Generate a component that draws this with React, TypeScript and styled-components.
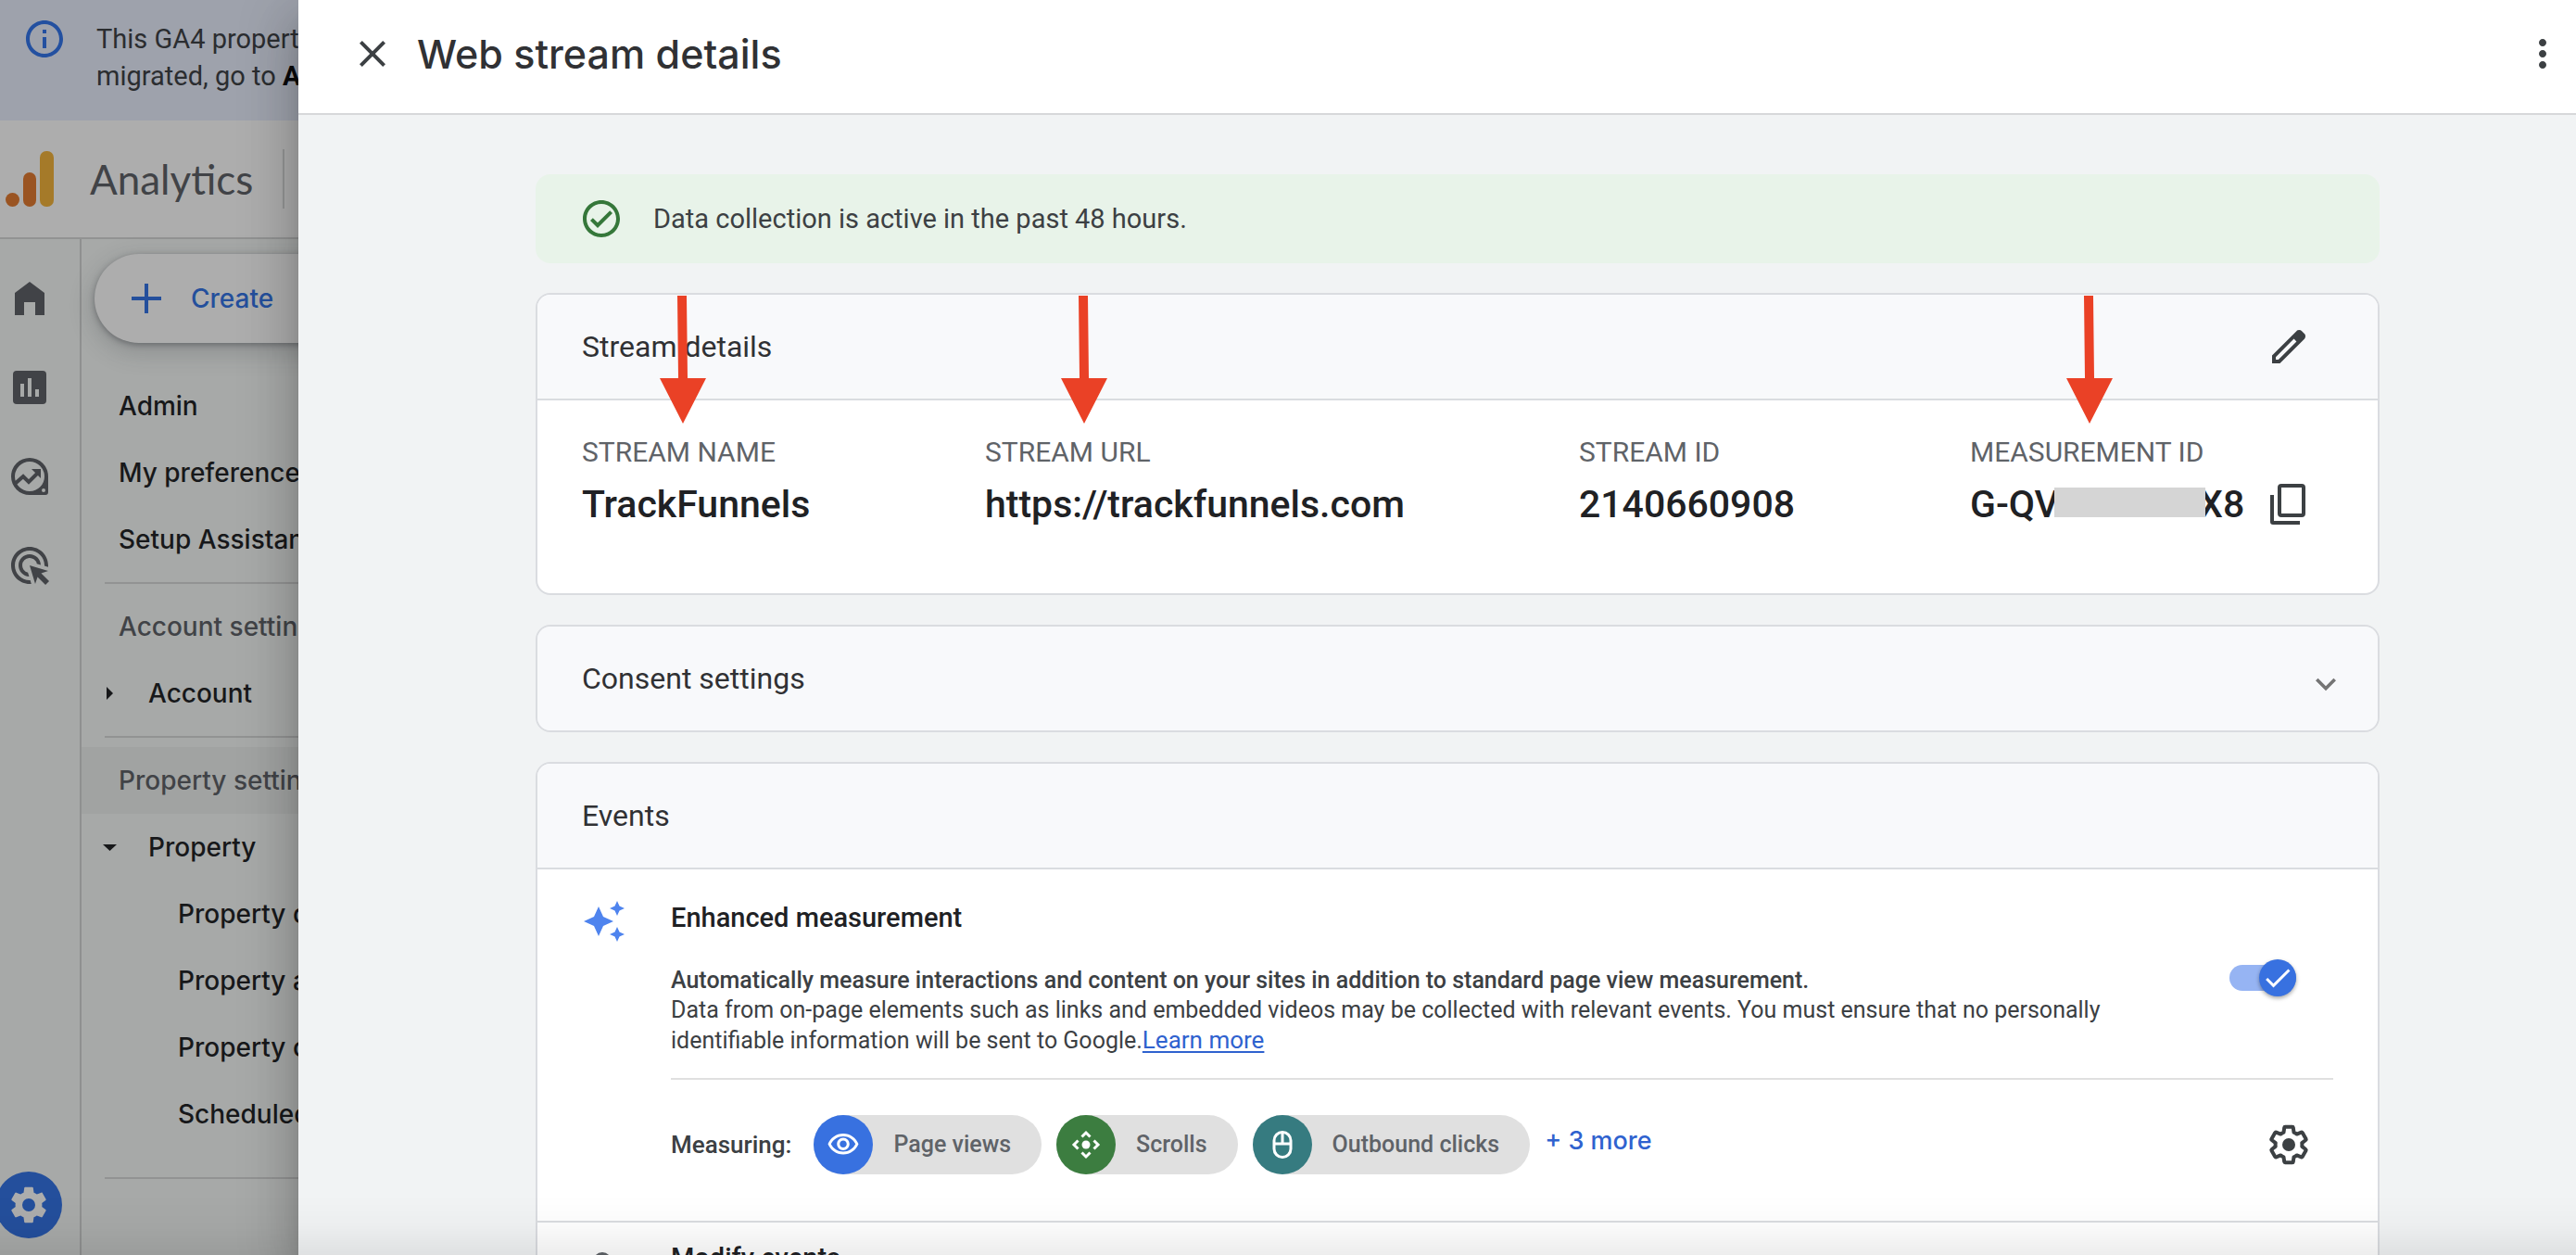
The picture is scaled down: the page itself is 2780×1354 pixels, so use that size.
import React from 'react';
import styled, { createGlobalStyle } from 'styled-components';

const sans = 'Roboto, "Noto Sans", sans-serif';
const display = 'Inter, "Open Sans", sans-serif';
const brand = 'Lato, "Open Sans", sans-serif';

const GlobalStyle = createGlobalStyle`
  *, *::before, *::after { box-sizing: border-box; }
  body { margin: 0; background: #f1f3f4; color: #202124; font-family: ${sans}; }
  h1, h2, h3 { margin: 0; font-weight: 400; }
  p, dl, dd, dt, ul { margin: 0; padding: 0; }
  ul { list-style: none; }
  button { border: 0; padding: 0; background: none; font: inherit; color: inherit; cursor: pointer; }
`;

const Page = styled.div`
  display: flex;
  height: 100vh;
  overflow: hidden;
`;

/* ---------- dimmed application behind the panel ---------- */

const Shell = styled.div`
  flex: 0 0 322px;
  display: flex;
  flex-direction: column;
  overflow: hidden;
  white-space: nowrap;
  background: #a7a9a8;
`;

const Notice = styled.div`
  display: flex;
  gap: 32px;
  height: 130px;
  flex: none;
  padding: 18px 24px;
  background: #9ea2ac;
  color: #2b2d30;
  font-size: 29px;
  line-height: 40px;
  svg { flex: none; color: #2350a0; }
  p { padding-top: 4px; }
  b { font-weight: 700; color: #0a0a0b; }
`;

const AppBar = styled.header`
  display: flex;
  align-items: center;
  height: 128px;
  flex: none;
  padding-left: 6px;
  background: #adadad;
  border-bottom: 2px solid #929393;
`;

const Brand = styled.span`
  margin-left: 38px;
  color: #414347;
  font-family: ${brand};
  font-size: 44px;
`;

const BarRule = styled.span`
  width: 2px;
  height: 64px;
  margin-left: 32px;
  background: #949595;
`;

const ShellBody = styled.div`
  display: flex;
  flex: 1;
  min-height: 0;
`;

const Rail = styled.nav`
  display: flex;
  flex-direction: column;
  gap: 48px;
  flex: 0 0 88px;
  padding: 40px 0 18px 8px;
  border-right: 2px solid #8f9090;
  color: #414347;
`;

const RailButton = styled.button`
  display: grid;
  place-items: center;
  width: 48px;
  height: 48px;
`;

const AdminButton = styled(RailButton)`
  width: 72px;
  height: 72px;
  margin: auto 0 0 -13px;
  border-radius: 50%;
  background: #244f9c;
  color: #adadad;
`;

const SideNav = styled.nav`
  flex: 1;
  min-width: 0;
  padding-top: 16px;
  font-family: ${display};
  font-size: 28px;
  font-weight: 500;
`;

const CreateButton = styled.button`
  display: flex;
  align-items: center;
  gap: 32px;
  width: 320px;
  height: 96px;
  margin: 0 0 32px 14px;
  padding-left: 40px;
  border-radius: 48px;
  background: #adadad;
  color: #244f9c;
  box-shadow: 0 2px 6px rgba(40, 42, 48, 0.4), 0 8px 24px 4px rgba(40, 42, 48, 0.18);
`;

const NavItem = styled.li<{ $level?: number; $muted?: boolean; $active?: boolean }>`
  display: flex;
  align-items: center;
  height: 72px;
  padding-left: ${p => (p.$level === 2 ? 104 : p.$level === 1 ? 19 : 40)}px;
  color: ${p => (p.$muted ? '#414347' : '#17181a')};
  background: ${p => (p.$active ? '#a1a3a2' : 'transparent')};
  svg { margin-right: 29px; }
`;

const NavRule = styled.li<{ $wide?: boolean }>`
  height: 2px;
  margin: ${p => (p.$wide ? 32 : 10)}px 0 10px 25px;
  background: #929393;
`;

/* ---------- panel ---------- */

const Panel = styled.section`
  position: relative;
  z-index: 1;
  display: flex;
  flex-direction: column;
  flex: 1;
  min-width: 0;
  background: #f1f3f4;
  box-shadow: 0 16px 20px -10px rgba(0, 0, 0, 0.2), 0 32px 48px 4px rgba(0, 0, 0, 0.14),
    0 12px 60px 10px rgba(0, 0, 0, 0.12);
`;

const PanelBar = styled.header`
  display: flex;
  align-items: center;
  flex: none;
  height: 124px;
  padding: 0 12px 6px 56px;
  border-bottom: 2px solid #d7d8da;
  background: #fff;
`;

const PanelTitle = styled.h1`
  flex: 1;
  margin-left: 24px;
  color: #303134;
  font-family: ${display};
  font-size: 43px;
  font-weight: 500;
`;

const IconButton = styled.button`
  display: grid;
  place-items: center;
  flex: none;
  min-width: 44px;
  height: 48px;
  color: #3c4043;
`;

const ExpandButton = styled(IconButton)`
  height: 56px;
  padding-top: 12px;
  color: #757575;
`;

const PanelBody = styled.main`
  display: flex;
  flex-direction: column;
  gap: 32px;
  flex: 1;
  min-height: 0;
  overflow: hidden;
  padding: 64px 212px 0 256px;
`;

const Status = styled.div`
  display: flex;
  align-items: center;
  gap: 32px;
  flex: none;
  height: 96px;
  padding: 0 47px;
  border-radius: 16px;
  background: #e8f3e9;
  color: #3c4043;
  font-size: 29px;
  svg { color: #35773a; }
`;

const Card = styled.section`
  flex: none;
  overflow: hidden;
  border: 2px solid #dadce0;
  border-radius: 16px;
  background: #fff;
`;

const CardHead = styled.header<{ $end?: number; $ruled?: boolean }>`
  display: flex;
  align-items: center;
  justify-content: space-between;
  height: ${p => (p.$ruled ? 114 : 112)}px;
  padding: 0 ${p => p.$end ?? 48}px 0 48px;
  border-bottom: ${p => (p.$ruled ? '2px solid #dadce0' : '0')};
  background: #f8f9fb;
  h2 { color: #303134; font-size: 32px; }
`;

const Details = styled.dl`
  display: grid;
  grid-template-columns: 435fr 641fr 422fr 392fr;
  padding: 36px 48px 72px;
`;

const Detail = styled.div`
  position: relative;
  dt { color: #5f6368; font-size: 30px; line-height: 40px; }
  dd {
    display: flex;
    align-items: center;
    margin-top: 12px;
    font-size: 41px;
    font-weight: 500;
    line-height: 48px;
  }
  button { margin: 0 24px 0 auto; }
`;

const Mask = styled.span`
  position: relative;
  width: 163px;
  height: 32px;
  margin: 0 -7px 4px -5px;
  background: #d5d5d5;
`;

const Pointer = styled.svg<{ $left: number }>`
  position: absolute;
  top: -149px;
  left: ${p => p.$left}px;
  width: 50px;
  height: 138px;
  fill: #ea4126;
`;

const Enhanced = styled.div`
  display: grid;
  grid-template-columns: 96px minmax(0, 1fr);
  padding: 32px 48px 0;
  > svg { margin: 2px; }
`;

const Summary = styled.div`
  display: flex;
  align-items: center;
  gap: 80px;
  padding: 0 40px 24px 0;
  border-bottom: 2px solid #e0e0e0;
`;

const Copy = styled.div`
  flex: 1;
  min-width: 0;
`;

const ItemTitle = styled.h3`
  color: #202124;
  font-size: 29px;
  font-weight: 500;
  line-height: 40px;
`;

const Blurb = styled.p`
  margin-top: 32px;
  color: #3c4043;
  font-size: 25px;
  line-height: 32px;
  strong { display: block; font-weight: 500; }
  a { color: #2f62cf; font-size: 26px; text-decoration-thickness: 2px; text-underline-offset: 3px; }
`;

const Switch = styled.label`
  position: relative;
  display: block;
  flex: none;
  width: 72px;
  height: 40px;
  input { position: absolute; inset: 0; width: 100%; height: 100%; margin: 0; opacity: 0; cursor: pointer; }
`;

const Track = styled.span`
  display: flex;
  align-items: center;
  justify-content: flex-end;
  height: 28px;
  margin: 6px 0;
  border-radius: 14px;
  background: #96b4f3;
`;

const Thumb = styled.span`
  display: grid;
  place-items: center;
  width: 40px;
  height: 40px;
  border-radius: 50%;
  background: #3871e0;
  color: #fff;
  box-shadow: 0 2px 4px rgba(0, 0, 0, 0.35);
`;

const Measuring = styled.div`
  display: flex;
  align-items: center;
  gap: 16px;
  padding: 38px 24px 50px 0;
  > button:last-child { margin-left: auto; }
`;

const MeasuringLabel = styled.span`
  margin-right: 8px;
  color: #3c4043;
  font-size: 26px;
  font-weight: 500;
`;

const Chip = styled.span`
  display: flex;
  align-items: center;
  gap: 22px;
  height: 64px;
  padding-right: 33px;
  border-radius: 32px;
  background: #e0e0e0;
  color: #5f6368;
  font-size: 25px;
  font-weight: 500;
  line-height: 60px;
`;

const ChipIcon = styled.span<{ $color: string }>`
  display: grid;
  place-items: center;
  width: 64px;
  height: 64px;
  border-radius: 50%;
  background: ${p => p.$color};
  color: #fff;
`;

const MoreLink = styled.button`
  align-self: flex-start;
  color: #2f62cf;
  font-family: ${display};
  font-size: 27px;
  font-weight: 500;
  line-height: 56px;
`;

const Modify = styled(Enhanced)`
  border-top: 2px solid #dadce0;
  padding-top: 18px;
  color: #5f6368;
`;

const BottomShade = styled.div`
  position: fixed;
  inset: auto 0 0 0;
  z-index: 2;
  height: 64px;
  pointer-events: none;
  background: linear-gradient(to bottom, rgba(0, 0, 0, 0), rgba(0, 0, 0, 0.02) 50%, rgba(0, 0, 0, 0.07));
`;

const Glyph = ({ d, size = 48 }: { d: string; size?: number }) => (
  <svg width={size} height={size} viewBox="0 0 24 24" fill="currentColor" aria-hidden="true">
    <path d={d} />
  </svg>
);

const icons = {
  info: 'M11 7h2v2h-2zm0 4h2v6h-2zm1-9C6.48 2 2 6.48 2 12s4.48 10 10 10 10-4.48 10-10S17.52 2 12 2zm0 18c-4.41 0-8-3.59-8-8s3.59-8 8-8 8 3.59 8 8-3.59 8-8 8z',
  home: 'M4 21V9l8-6 8 6v12h-5v-7H9v7z',
  ads: 'M11.71 17.99A5.993 5.993 0 016 12c0-3.31 2.69-6 6-6 3.22 0 5.84 2.53 5.99 5.71l-2.1-.63a3.999 3.999 0 10-4.81 4.81l.63 2.1zM22 12c0 .3-.01.6-.04.9l-1.97-.59c.01-.1.01-.21.01-.31 0-4.42-3.58-8-8-8s-8 3.58-8 8 3.58 8 8 8c.1 0 .21 0 .31-.01l.59 1.97c-.3.03-.6.04-.9.04-5.52 0-10-4.48-10-10S6.48 2 12 2s10 4.48 10 10zm-3.77 4.26L22 15l-10-3 3 10 1.26-3.77 4.27 4.27 1.98-1.98-4.28-4.26z',
  close: 'M19 6.41L17.59 5 12 10.59 6.41 5 5 6.41 10.59 12 5 17.59 6.41 19 12 13.41 17.59 19 19 17.59 13.41 12z',
  more: 'M12 8c1.1 0 2-.9 2-2s-.9-2-2-2-2 .9-2 2 .9 2 2 2zm0 2c-1.1 0-2 .9-2 2s.9 2 2 2 2-.9 2-2-.9-2-2-2zm0 6c-1.1 0-2 .9-2 2s.9 2 2 2 2-.9 2-2-.9-2-2-2z',
  ok: 'M12 2C6.48 2 2 6.48 2 12s4.48 10 10 10 10-4.48 10-10S17.52 2 12 2zm0 18c-4.41 0-8-3.59-8-8s3.59-8 8-8 8 3.59 8 8-3.59 8-8 8zm4.59-12.42L10 14.17l-2.59-2.58L6 13l4 4 8-8z',
  edit: 'M5 19h1.425L16.2 9.225 14.775 7.8 5 17.575V19zm-2 2v-4.25L16.2 3.575q.3-.275.663-.425T17.625 3t.775.15.65.45L20.425 5q.3.275.437.65T21 6.4q0 .4-.138.763t-.437.662L7.25 21H3z',
  expand: 'M16.59 8.59L12 13.17 7.41 8.59 6 10l6 6 6-6z',
  check: 'M9 16.17L4.83 12l-1.42 1.41L9 19 21 7l-1.41-1.41z',
  eye: 'M12 6c3.79 0 7.17 2.13 8.82 5.5C19.17 14.87 15.79 17 12 17s-7.17-2.13-8.82-5.5C4.83 8.13 8.21 6 12 6m0-2C7 4 2.73 7.11 1 11.5 2.73 15.89 7 19 12 19s9.27-3.11 11-7.5C21.27 7.11 17 4 12 4zm0 5c1.38 0 2.5 1.12 2.5 2.5S13.38 14 12 14s-2.5-1.12-2.5-2.5S10.62 9 12 9m0-2c-2.48 0-4.5 2.02-4.5 4.5S9.52 16 12 16s4.5-2.02 4.5-4.5S14.48 7 12 7z',
};

const gearShape =
  'M19.14 12.94c.04-.3.06-.61.06-.94 0-.32-.02-.64-.07-.94l2.03-1.58c.18-.14.23-.41.12-.61l-1.92-3.32c-.12-.22-.37-.29-.59-.22l-2.39.96c-.5-.38-1.03-.7-1.62-.94L14.4 2.81c-.04-.24-.24-.41-.48-.41h-3.84c-.24 0-.43.17-.47.41L9.25 5.35C8.66 5.59 8.12 5.92 7.63 6.29L5.24 5.33c-.22-.08-.47 0-.59.22L2.74 8.87c-.12.21-.08.47.12.61l2.03 1.58C4.84 11.36 4.8 11.69 4.8 12s.02.64.07.94l-2.03 1.58c-.18.14-.23.41-.12.61l1.92 3.32c.12.22.37.29.59.22l2.39-.96c.5.38 1.03.7 1.62.94l.36 2.54c.05.24.24.41.48.41h3.84c.24 0 .44-.17.47-.41l.36-2.54c.59-.24 1.13-.56 1.62-.94l2.39.96c.22.08.47 0 .59-.22l1.92-3.32c.12-.22.07-.47-.12-.61z';

const AnalyticsLogo = () => (
  <svg width="53" height="60" viewBox="0 0 53 60" aria-hidden="true">
    <rect x="37" y="0" width="15" height="60" rx="7" fill="#a57a29" />
    <rect x="19" y="23" width="14" height="37" rx="7" fill="#9a5422" />
    <circle cx="7.500" cy="52.500" r="7.500" fill="#9a5422" />
  </svg>
);

const ReportIcon = () => (
  <svg width="36" height="36" viewBox="0 0 36 36" aria-hidden="true">
    <rect width="36" height="36" rx="4" fill="currentColor" />
    <path d="M8 14h4v14H8zM16 8h4v20h-4zM24 20h4v8h-4z" fill="#a7a9a8" />
  </svg>
);

const ExploreIcon = () => (
  <svg width="40" height="40" viewBox="0 0 40 40" aria-hidden="true">
    <path
      fill="currentColor"
      fillRule="evenodd"
      d="M20 0a20 20 0 0 1 20 20v17a3 3 0 0 1-3 3H20a20 20 0 0 1 0-40zm0 4a16 16 0 1 0 0 32 16 16 0 0 0 0-32zm15 29a2 2 0 1 0 0 4 2 2 0 0 0 0-4z"
    />
    <path d="M4 28l9-8 6 6L30 15" fill="none" stroke="currentColor" strokeWidth="4" />
    <path d="M22 12h10v10z" fill="currentColor" />
  </svg>
);

const GearFilled = () => (
  <svg width="48" height="48" viewBox="0 0 24 24" aria-hidden="true">
    <path fill="currentColor" fillRule="evenodd" d={gearShape + 'M12 15.5a3.500 3.500 0 1 1 0-7 3.500 3.500 0 0 1 0 7z'} />
  </svg>
);

const GearOutline = () => (
  <svg width="48" height="48" viewBox="0 0 24 24" aria-hidden="true">
    <path fill="none" stroke="currentColor" strokeWidth="2" strokeLinejoin="round" d={gearShape} />
    <circle cx="12" cy="12" r="3.500" fill="currentColor" />
  </svg>
);

const CopyIcon = () => (
  <svg width="48" height="48" viewBox="0 0 24 24" fill="none" stroke="currentColor" strokeWidth="2" aria-hidden="true">
    <rect x="7" y="2" width="13" height="16" rx="1" />
    <path d="M3 7v14.500q0 .5.5.5H18" />
  </svg>
);

const SparkIcon = () => (
  <svg width="44" height="44" viewBox="0 0 44 44" fill="#4f84ee" aria-hidden="true">
    <path d="M16 6l5 11 11 5-11 5-5 11-5-11-11-5 11-5z" />
    <path d="M36 0l2.500 5.500L44 8l-5.500 2.500L36 16l-2.500-5.500L28 8l5.500-2.500z" />
    <path d="M36 28l2.500 5.500L44 36l-5.500 2.500L36 44l-2.500-5.500L28 36l5.500-2.500z" />
  </svg>
);

const ScrollIcon = () => (
  <svg width="32" height="32" viewBox="0 0 32 32" fill="none" stroke="currentColor" strokeWidth="3" aria-hidden="true">
    <circle cx="16" cy="16" r="4.500" fill="currentColor" stroke="none" />
    {[0, 90, 180, 270].map(a => (
      <path key={a} d="M11.500 7.500L16 3l4.500 4.500" transform={`rotate(${a} 16 16)`} />
    ))}
  </svg>
);

const MouseIcon = () => (
  <svg width="24" height="32" viewBox="0 0 24 32" fill="none" stroke="currentColor" strokeWidth="3" aria-hidden="true">
    <rect x="3" y="2.500" width="18" height="27" rx="9" />
    <path d="M3 15h18M12 2.500V15" />
  </svg>
);

const TouchIcon = () => (
  <svg width="44" height="56" viewBox="0 0 44 56" fill="none" stroke="currentColor" strokeWidth="4" aria-hidden="true">
    <circle cx="20" cy="22" r="8" />
    <path d="M16 22v20l-6-2 10 12h14V36l-14-5v-9" />
  </svg>
);

const Arrow = ({ left }: { left: number }) => (
  <Pointer $left={left} viewBox="0 0 50 138" aria-hidden="true">
    <path d="M19 0h10l1 89h20L25 138 0 89h20z" />
  </Pointer>
);

const chips = [
  { label: 'Page views', color: '#3871e0', icon: <Glyph d={icons.eye} size={36} /> },
  { label: 'Scrolls', color: '#3c7d40', icon: <ScrollIcon /> },
  { label: 'Outbound clicks', color: '#367b80', icon: <MouseIcon /> },
];

export default function App() {
  return (
    <Page>
      <GlobalStyle />
      <Shell>
        <Notice>
          <Glyph d={icons.info} />
          <p>
            This GA4 property
            <br />
            migrated, go to <b>Admin</b>
          </p>
        </Notice>
        <AppBar>
          <AnalyticsLogo />
          <Brand>Analytics</Brand>
          <BarRule />
        </AppBar>
        <ShellBody>
          <Rail>
            <RailButton aria-label="Home"><Glyph d={icons.home} /></RailButton>
            <RailButton aria-label="Reports"><ReportIcon /></RailButton>
            <RailButton aria-label="Explore"><ExploreIcon /></RailButton>
            <RailButton aria-label="Advertising"><Glyph d={icons.ads} /></RailButton>
            <AdminButton aria-label="Admin"><GearFilled /></AdminButton>
          </Rail>
          <SideNav>
            <CreateButton>
              <svg width="32" height="32" viewBox="0 0 32 32" fill="currentColor" aria-hidden="true">
                <path d="M14 0h4v14h14v4H18v14h-4V18H0v-4h14z" />
              </svg>
              Create
            </CreateButton>
            <ul>
              <NavItem>Admin</NavItem>
              <NavItem>My preferences</NavItem>
              <NavItem>Setup Assistant</NavItem>
              <NavRule />
              <NavItem $muted>Account settings</NavItem>
              <NavItem $level={1}>
                <svg width="24" height="24" viewBox="0 0 24 24" fill="currentColor" aria-hidden="true"><path d="M8 5l7 7-7 7z" /></svg>
                Account
              </NavItem>
              <NavRule />
              <NavItem $muted $active>Property settings</NavItem>
              <NavItem $level={1}>
                <svg width="24" height="24" viewBox="0 0 24 24" fill="currentColor" aria-hidden="true"><path d="M4 9h15l-7.500 7z" /></svg>
                Property
              </NavItem>
              <NavItem $level={2}>Property details</NavItem>
              <NavItem $level={2}>Property access</NavItem>
              <NavItem $level={2}>Property change</NavItem>
              <NavItem $level={2}>Scheduled emails</NavItem>
              <NavRule $wide />
            </ul>
          </SideNav>
        </ShellBody>
      </Shell>

      <Panel>
        <PanelBar>
          <IconButton aria-label="Close"><Glyph d={icons.close} /></IconButton>
          <PanelTitle>Web stream details</PanelTitle>
          <IconButton aria-label="More options"><Glyph d={icons.more} /></IconButton>
        </PanelBar>
        <PanelBody>
          <Status role="status">
            <Glyph d={icons.ok} />
            Data collection is active in the past 48 hours.
          </Status>

          <Card>
            <CardHead $ruled $end={72}>
              <h2>Stream details</h2>
              <IconButton aria-label="Edit stream"><Glyph d={icons.edit} /></IconButton>
            </CardHead>
            <Details>
              <Detail>
                <dt>STREAM NAME</dt>
                <dd>TrackFunnels</dd>
                <Arrow left={84} />
              </Detail>
              <Detail>
                <dt>STREAM URL</dt>
                <dd>https://trackfunnels.com</dd>
                <Arrow left={82} />
              </Detail>
              <Detail>
                <dt>STREAM ID</dt>
                <dd>2140660908</dd>
              </Detail>
              <Detail>
                <dt>MEASUREMENT ID</dt>
                <dd>
                  G-QV<Mask />X8
                  <IconButton aria-label="Copy measurement ID"><CopyIcon /></IconButton>
                </dd>
                <Arrow left={104} />
              </Detail>
            </Details>
          </Card>

          <Card>
            <CardHead $end={34}>
              <h2>Consent settings</h2>
              <ExpandButton aria-label="Expand consent settings"><Glyph d={icons.expand} size={44} /></ExpandButton>
            </CardHead>
          </Card>

          <Card>
            <CardHead $ruled>
              <h2>Events</h2>
            </CardHead>
            <Enhanced>
              <SparkIcon />
              <div>
                <Summary>
                  <Copy>
                    <ItemTitle>Enhanced measurement</ItemTitle>
                    <Blurb>
                      <strong>
                        Automatically measure interactions and content on your sites in addition to standard page view
                        measurement.
                      </strong>
                      Data from on-page elements such as links and embedded videos may be collected with relevant events.
                      You must ensure that no personally identifiable information will be sent to Google.
                      <a href="#learn-more">Learn more</a>
                    </Blurb>
                  </Copy>
                  <Switch>
                    <input type="checkbox" role="switch" defaultChecked aria-label="Enhanced measurement" />
                    <Track>
                      <Thumb><Glyph d={icons.check} size={36} /></Thumb>
                    </Track>
                  </Switch>
                </Summary>
                <Measuring>
                  <MeasuringLabel>Measuring:</MeasuringLabel>
                  {chips.map(c => (
                    <Chip key={c.label}>
                      <ChipIcon $color={c.color}>{c.icon}</ChipIcon>
                      {c.label}
                    </Chip>
                  ))}
                  <MoreLink>+ 3 more</MoreLink>
                  <IconButton aria-label="Measurement settings"><GearOutline /></IconButton>
                </Measuring>
              </div>
            </Enhanced>
            <Modify>
              <TouchIcon />
              <ItemTitle>Modify events</ItemTitle>
            </Modify>
          </Card>
        </PanelBody>
      </Panel>
      <BottomShade />
    </Page>
  );
}
